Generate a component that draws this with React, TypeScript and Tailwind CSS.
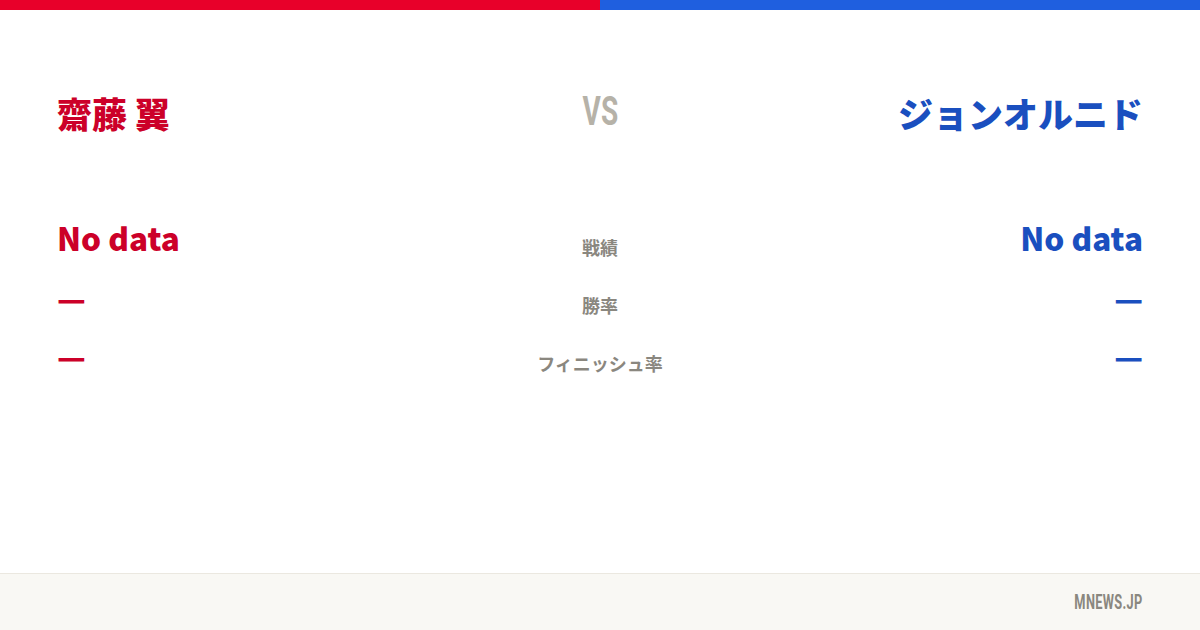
import React from "react";

const jp = { fontFamily: '"Noto Sans CJK JP", "Noto Sans", sans-serif' };
const cond = { fontFamily: 'Roboto, "Liberation Sans", sans-serif' };

export default function App() {
  const stats = [
    { label: "戦績", left: "No data", right: "No data", big: true },
    { label: "勝率", left: "—", right: "—", big: false },
    { label: "フィニッシュ率", left: "—", right: "—", big: false },
  ];
  return (
    <div className="w-[1200px] h-[630px] flex flex-col bg-white overflow-hidden" style={jp}>
      <div className="flex h-[10px] shrink-0">
        <div className="flex-1 bg-[#e8002a]" />
        <div className="flex-1 bg-[#1f5fdf]" />
      </div>
      <div className="flex-1 px-[57px] pt-[78px]">
        <div className="grid grid-cols-[1fr_auto_1fr] items-center">
          <div className="text-[35px] font-black leading-[50px] text-[#cc0029]">齋藤 翼</div>
          <div className="text-[40px] font-bold leading-[50px] text-[#b6b2a8] scale-x-[0.7] -mt-[2px]" style={cond}>VS</div>
          <div className="text-[35px] font-black leading-[50px] text-[#1a4fbf] text-right">ジョンオルニド</div>
        </div>
        <div className="mt-[79px] flex flex-col">
          {stats.map((s) => (
            <div key={s.label} className={`grid grid-cols-[1fr_auto_1fr] items-start ${s.big ? "h-[60px]" : "h-[58px]"}`}>
              <div className="text-[31.5px] font-black leading-[40px] text-[#cc0029]">{s.left}</div>
              <div className={`text-[18px] font-bold leading-[24px] text-[#8a877f] text-center ${s.big ? "mt-[18px]" : "mt-[16px]"}`}>{s.label}</div>
              <div className="text-[31.5px] font-black leading-[40px] text-[#1a4fbf] text-right">{s.right}</div>
            </div>
          ))}
        </div>
      </div>
      <div className="h-[57px] shrink-0 bg-[#f9f8f4] border-t border-[#ebe8e0] flex items-center justify-end px-[57px]">
        <span className="text-[20px] font-bold text-[#8a877f] scale-x-[0.64] origin-right tracking-wide" style={cond}>MNEWS.JP</span>
      </div>
    </div>
  );
}
